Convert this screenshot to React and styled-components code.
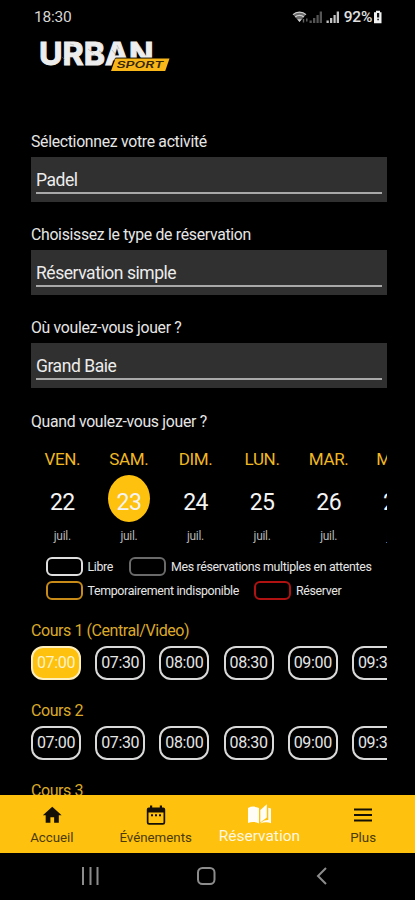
import React from 'react';
import styled, { createGlobalStyle } from 'styled-components';
import { MdHome } from 'react-icons/md';

const GlobalStyle = createGlobalStyle`
  * {
    box-sizing: border-box;
  }

  body {
    margin: 0;
    background: #000;
    font-family: 'Roboto', 'Liberation Sans', sans-serif;
  }
`;

const Screen = styled.div`
  width: 415px;
  height: 900px;
  display: flex;
  flex-direction: column;
  overflow: hidden;
  background: #000;
  color: #e6e6e6;
`;

const StatusBar = styled.div`
  flex: none;
  height: 32px;
  display: flex;
  align-items: center;
  justify-content: space-between;
  padding: 1px 32px 0 34px;
`;

const Clock = styled.span`
  font-size: 15.5px;
  letter-spacing: -0.2px;
  color: #d6d6d6;
`;

const StatusIcons = styled.div`
  display: flex;
  align-items: center;
`;

const Battery = styled.span`
  margin: 0 1px 0 4px;
  font-size: 15.5px;
  font-weight: 500;
  letter-spacing: -0.3px;
  color: #e0e0e0;
`;

const Header = styled.header`
  flex: none;
  height: 100px;
  padding: 6px 0 0 36px;

  svg {
    display: block;
  }
`;

const Content = styled.main`
  flex: 1;
  min-height: 0;
  overflow: hidden;
  padding: 0 28.5px 0 31px;
`;

const Label = styled.div`
  height: 25px;
  line-height: 19px;
  font-size: 15.8px;
  letter-spacing: -0.3px;
  white-space: nowrap;
`;

const Field = styled.div`
  height: 45px;
  margin-bottom: 23.2px;
  padding: 11px 4.5px 0 5px;
  background: #303030;
`;

const FieldValue = styled.div`
  height: 26px;
  line-height: 25px;
  border-bottom: 2px solid #a9a9a9;
  font-size: 17.5px;
  letter-spacing: -0.45px;
  color: #ececec;
`;

const Days = styled.div`
  display: flex;
  height: 118.4px;
  padding-top: 12px;
  overflow: hidden;
`;

const Day = styled.div`
  flex: none;
  width: 66.6px;
  display: flex;
  flex-direction: column;
  align-items: center;
  padding-right: 4px;
`;

const DayName = styled.div`
  line-height: 20px;
  font-size: 17px;
  letter-spacing: -0.35px;
  color: #efb823;
`;

const DayNumber = styled.div`
  width: 42px;
  height: 47px;
  margin-top: 6px;
  padding-top: 6px;
  border-radius: 50%;
  background: ${({ $selected }) => ($selected ? '#fec10d' : 'transparent')};
  line-height: 43px;
  text-align: center;
  font-size: 23px;
  letter-spacing: -0.6px;
  color: #f4f4f4;
`;

const Month = styled.div`
  margin-top: 6px;
  line-height: 16px;
  font-size: 12px;
  letter-spacing: -0.3px;
  color: #b4b4b4;
`;

const Legend = styled.div`
  padding-left: 14.5px;
  height: 65.6px;
`;

const LegendRow = styled.div`
  display: flex;
  align-items: center;
  height: 23.4px;
`;

const Swatch = styled.span`
  width: 37px;
  height: 19px;
  margin-right: 5px;
  border: 2px solid ${({ $color }) => $color};
  border-radius: 6px;
`;

const LegendText = styled.span`
  width: ${({ $width }) => $width}px;
  white-space: nowrap;
  font-size: 12.4px;
  letter-spacing: -0.34px;
`;

const Court = styled.section`
  height: 80.3px;
`;

const CourtName = styled.div`
  height: 25px;
  line-height: 19px;
  font-size: 16px;
  letter-spacing: -0.43px;
  color: #dba928;
`;

const Slots = styled.div`
  display: flex;
  gap: 14.2px;
  overflow: hidden;
`;

const Slot = styled.div`
  flex: none;
  width: 50px;
  height: 34px;
  display: flex;
  align-items: center;
  justify-content: center;
  border: 2px solid ${({ $selected }) => ($selected ? '#fdeebd' : '#d9d9d9')};
  border-radius: 12px;
  background: ${({ $selected }) => ($selected ? '#fec10d' : 'transparent')};
  font-size: 16px;
  letter-spacing: -0.35px;
  color: ${({ $selected }) => ($selected ? '#fff3c9' : '#e6e6e6')};
`;

const TabBar = styled.nav`
  flex: none;
  height: 57.5px;
  display: flex;
  background: #fec10d;
`;

const Tab = styled.div`
  flex: 1;
  display: flex;
  flex-direction: column;
  align-items: center;
  color: ${({ $active }) => ($active ? '#fff8e0' : '#141005')};
`;

const TabIcon = styled.div`
  height: 33px;
  display: flex;
  align-items: center;
  padding-top: 7px;
`;

const TabText = styled.span`
  line-height: ${({ $active }) => ($active ? 17 : 19)}px;
  font-size: ${({ $active }) => ($active ? 15.5 : 13.3)}px;
  color: ${({ $active }) => ($active ? '#fff8e0' : '#4a3a0c')};
`;

const SystemBar = styled.div`
  flex: none;
  height: 47.5px;
  display: flex;
  align-items: center;
  gap: 98px;
  padding-left: 81px;
`;

const WifiIcon = () => (
  <svg width="17" height="14" viewBox="0 0 17 14" fill="none">
    <path d="M1 4.600C4.500 1.200 10.500 1.200 14 4.600L7.500 12Z" fill="#6d6d6d" />
    <path d="M1 4.600C4.500 1.200 10.500 1.200 14 4.600M3.200 7C5.500 4.900 9.500 4.900 11.800 7" stroke="#d0d0d0" strokeWidth="1.300" />
    <path d="M5.300 9.200h4.400L7.500 12Z" fill="#d0d0d0" />
    <path d="M11.500 9v3.500M14.800 8.500v3" stroke="#666" strokeWidth="1.400" />
  </svg>
);

const SignalIcon = ({ color }) => (
  <svg width="14" height="14" viewBox="0 0 14 14" fill={color}>
    <path d="M.5 10.500h2.300V13H.5zM4 8h2.300v5H4zM7.500 5h2.200v8H7.500zM10.700 1.500H13V13h-2.300z" />
  </svg>
);

const BatteryIcon = () => (
  <svg width="10" height="14" viewBox="0 0 10 14">
    <path d="M3 .8h4v1.500h1.500v10.900H1V2.300h2z" fill="#f2f2f2" />
    <path d="M4 3h2.200v4.500H4z" fill="#151515" />
    <path d="M4.200 8.800h1.800v1.500H4.200z" fill="#333" />
  </svg>
);

const Logo = () => (
  <svg width="140" height="38" viewBox="36 38 140 38">
    <text
      x="39"
      y="64.500"
      textLength="114.500"
      lengthAdjust="spacingAndGlyphs"
      fontFamily="Inter, 'Open Sans', sans-serif"
      fontWeight="700"
      fontSize="31.500"
      fill="#ededed"
      stroke="#ededed"
      strokeWidth="1.100"
    >
      URBAN
    </text>
    {/* worn print over the letters */}
    <g stroke="#888" strokeWidth=".9" opacity=".45">
      <path d="M62 57l3 3M70 44l4 1M88 49l5 4M91 57l4-3M99 51l4 2M112 50l4 5M117 45l2 4M139 45l3 4" />
    </g>
    <path d="M115.500 58H170l-4.500 13.200H110.500z" fill="#000" stroke="#000" strokeWidth=".8" />
    <path d="M115.500 58.500H169.500l-4.300 12.500H111z" fill="#f9b619" />
    <text
      x="116.500"
      y="68.300"
      textLength="47"
      lengthAdjust="spacingAndGlyphs"
      fontFamily="Inter, 'Open Sans', sans-serif"
      fontWeight="600"
      fontStyle="italic"
      fontSize="9.500"
      fill="#35270a"
    >
      SPORT
    </text>
  </svg>
);

const HomeIcon = () => <MdHome size={22.500} />;

const CalendarIcon = () => (
  <svg width="20" height="22" viewBox="0 0 20 22">
    <path d="M4 1.500h2.200v2h7.600v-2H16v2h1.200q2 0 2 2V18.500q0 2.300-2.300 2.300H3.100Q.8 20.800.8 18.500V5.500q0-2 2-2H4z" fill="#141005" />
    <path d="M2.500 8.500h15v9.400q0 1.200-1.200 1.200H3.700q-1.200 0-1.200-1.200z" fill="#fec10d" />
    <path d="M5 10.300h2v1.900H5zM9 10.300h2v1.900H9zM13 10.300h2v1.900h-2z" fill="#141005" />
  </svg>
);

const BookIcon = () => (
  <svg width="25" height="22" viewBox="0 0 25 22">
    <path d="M1 4C4.500 2 8.500 2.300 12 4.100V19.500C8.500 17.500 4.500 17.500 1 19z" fill="#fffdf5" />
    <path d="M13.300 6L19.800.3V13.500l-6.500 5z" fill="#fffdf5" />
    <path d="M21.300 3.700l2.700.8v14.700c-3-1.400-7-1.500-10.700.2 2-2.400 5-3.500 8-3.400z" fill="#fffdf5" />
  </svg>
);

const MenuIcon = () => (
  <svg width="20" height="16" viewBox="0 0 20 16" stroke="#141005" strokeWidth="2">
    <path d="M1 2.500h18M1 8h18M1 13.500h18" />
  </svg>
);

const fields = [
  { label: 'Sélectionnez votre activité', value: 'Padel' },
  { label: 'Choisissez le type de réservation', value: 'Réservation simple' },
  { label: 'Où voulez-vous jouer ?', value: 'Grand Baie' },
];

const days = [
  { name: 'VEN.', number: 22 },
  { name: 'SAM.', number: 23 },
  { name: 'DIM.', number: 24 },
  { name: 'LUN.', number: 25 },
  { name: 'MAR.', number: 26 },
  { name: 'MER.', number: 27 },
];

const courts = ['Cours 1 (Central/Video)', 'Cours 2', 'Cours 3'];
const hours = ['07:00', '07:30', '08:00', '08:30', '09:00', '09:30'];

const tabs = [
  { name: 'Accueil', Icon: HomeIcon },
  { name: 'Événements', Icon: CalendarIcon },
  { name: 'Réservation', Icon: BookIcon },
  { name: 'Plus', Icon: MenuIcon },
];

const App = () => {
  const [day, setDay] = React.useState(23);
  const [slot, setSlot] = React.useState('0-07:00');
  const [tab, setTab] = React.useState('Réservation');

  return (
    <Screen>
      <GlobalStyle />
      <StatusBar>
        <Clock>18:30</Clock>
        <StatusIcons>
          <WifiIcon />
          <SignalIcon color="#555" />
          <svg width="3" height="14" />
          <SignalIcon color="#c4c4c4" />
          <Battery>92%</Battery>
          <BatteryIcon />
        </StatusIcons>
      </StatusBar>

      <Header>
        <Logo />
      </Header>

      <Content>
        {fields.map(({ label, value }) => (
          <React.Fragment key={label}>
            <Label>{label}</Label>
            <Field>
              <FieldValue>{value}</FieldValue>
            </Field>
          </React.Fragment>
        ))}

        <Label>Quand voulez-vous jouer ?</Label>
        <Days>
          {days.map(({ name, number }) => (
            <Day key={number} onClick={() => setDay(number)}>
              <DayName>{name}</DayName>
              <DayNumber $selected={day === number}>{number}</DayNumber>
              <Month>juil.</Month>
            </Day>
          ))}
        </Days>

        <Legend>
          <LegendRow>
            <Swatch $color="#dedede" />
            <LegendText $width={41.5}>Libre</LegendText>
            <Swatch $color="#6a6a6a" />
            <LegendText>Mes réservations multiples en attentes</LegendText>
          </LegendRow>
          <LegendRow>
            <Swatch $color="#c98b18" />
            <LegendText $width={166.5}>Temporairement indisponible</LegendText>
            <Swatch $color="#b01212" />
            <LegendText>Réserver</LegendText>
          </LegendRow>
        </Legend>

        {courts.map((court, i) => (
          <Court key={court}>
            <CourtName>{court}</CourtName>
            <Slots>
              {hours.map((hour) => (
                <Slot
                  key={hour}
                  $selected={slot === `${i}-${hour}`}
                  onClick={() => setSlot(`${i}-${hour}`)}
                >
                  {hour}
                </Slot>
              ))}
            </Slots>
          </Court>
        ))}
      </Content>

      <TabBar>
        {tabs.map(({ name, Icon }) => (
          <Tab key={name} $active={tab === name} onClick={() => setTab(name)}>
            <TabIcon>
              <Icon />
            </TabIcon>
            <TabText $active={tab === name}>{name}</TabText>
          </Tab>
        ))}
      </TabBar>

      <SystemBar>
        <svg width="18" height="18" stroke="#8c8c8c" strokeWidth="2">
          <path d="M2 0v18M9.500 0v18M16.500 0v18" />
        </svg>
        <svg width="19" height="18" fill="none" stroke="#8c8c8c" strokeWidth="2">
          <rect x="1" y="1" width="16.500" height="16" rx="4.500" />
        </svg>
        <svg width="14" height="18" fill="none" stroke="#8c8c8c" strokeWidth="2">
          <path d="M12 1L4 9l8 8" />
        </svg>
      </SystemBar>
    </Screen>
  );
};

export default App;
